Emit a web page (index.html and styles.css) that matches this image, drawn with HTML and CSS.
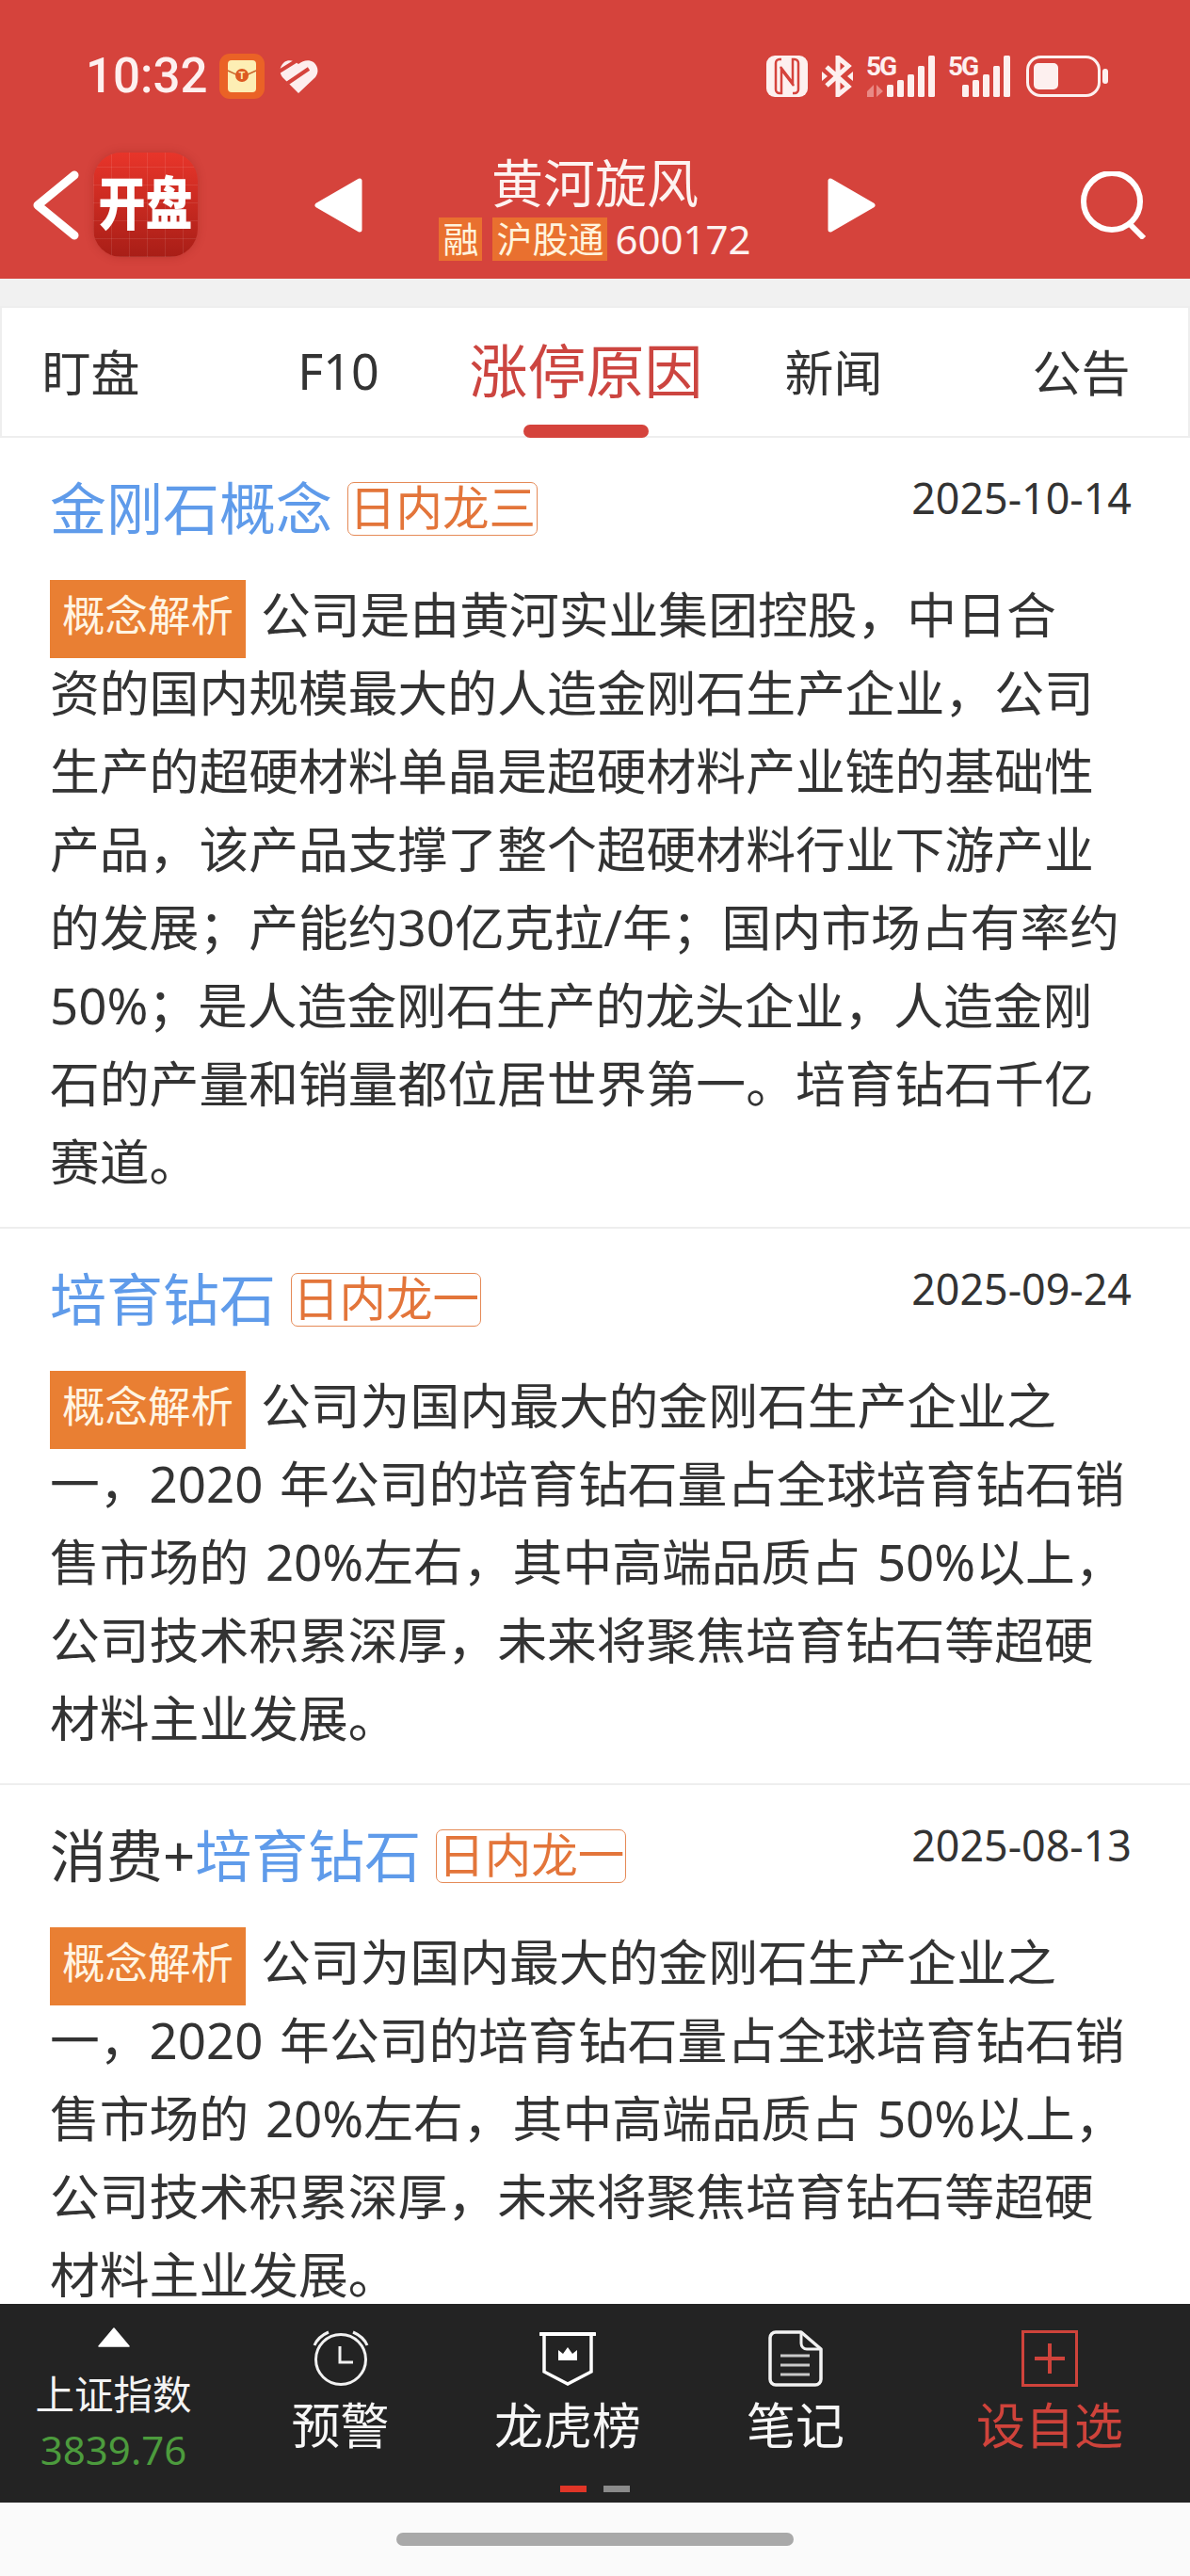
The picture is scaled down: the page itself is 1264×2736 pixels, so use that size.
FILE: index.html
```html
<!DOCTYPE html>
<html lang="zh-CN">
<head>
<meta charset="utf-8">
<title>黄河旋风</title>
<link rel="stylesheet" href="styles.css">
</head>
<body>
<div class="app">
  <header class="header">
    <div class="status">
      <div class="status-left">
        <span class="time">10:32</span>
        <svg class="ic-env" viewBox="0 0 48 48"><rect width="48" height="48" rx="11" fill="#ea6226"/><rect x="9" y="7" width="30" height="34" rx="4" fill="#fdeeb4"/><path d="M9 18l15 7 15-7" fill="none" stroke="#c9662c" stroke-width="1.5"/><circle cx="24" cy="23" r="7" fill="#dd5a22"/><text x="24" y="27" class="env-t">T</text></svg>
        <svg class="ic-heart" viewBox="0 0 41 35"><path d="M20 35L3 18C-1 13 0 6 5 2c4-3 10-2 15 2 5-4 11-5 16-2 5 4 6 11 2 16z" fill="#fdeeee"/><path d="M-2 13L17 1M6 26L31 9" stroke="#d5433c" stroke-width="4" fill="none"/></svg>
      </div>
      <div class="status-right">
        <svg class="ic-nfc" viewBox="0 0 44 44"><rect width="44" height="44" rx="9" fill="#fdf0ef"/><path d="M16 4h-2a4 4 0 0 0-4 4v28a4 4 0 0 0 4 4h2V15l13 17" fill="none" stroke="#d5433c" stroke-width="2.5"/><path d="M28 40h2a4 4 0 0 0 4-4V8a4 4 0 0 0-4-4h-2v25L15 12" fill="none" stroke="#d5433c" stroke-width="2.5"/></svg>
        <svg class="ic-bt" viewBox="0 0 35 44"><path d="M6 12l23 21-11 9V2l11 9L6 32" fill="none" stroke="#fdf0ef" stroke-width="5"/><path d="M1 17l6 5-6 5zM34 17l-6 5 6 5z" fill="#fdf0ef"/></svg>
        <svg class="ic-sig" viewBox="0 0 72 44"><text x="-1" y="21" class="sig-t">5G</text><path d="M0 38l7-7v13H0zM10 31l7 7-7 6z" fill="#e98a85"/><rect x="21" y="31" width="7" height="13" rx="1.5" fill="#fdf0ef"/><rect x="32" y="26" width="7" height="18" rx="1.5" fill="#fdf0ef"/><rect x="43" y="20" width="7" height="24" rx="1.5" fill="#fdf0ef"/><rect x="54" y="11" width="7" height="33" rx="1.5" fill="#fdf0ef"/><rect x="65" y="0" width="7" height="44" rx="1.5" fill="#fdf0ef"/></svg>
        <svg class="ic-sig ic-sig-b" viewBox="0 0 66 44"><text x="0" y="21" class="sig-t">5G</text><rect x="15" y="31" width="7" height="13" rx="1.5" fill="#fdf0ef"/><rect x="26" y="26" width="7" height="18" rx="1.5" fill="#fdf0ef"/><rect x="37" y="20" width="7" height="24" rx="1.5" fill="#fdf0ef"/><rect x="48" y="11" width="7" height="33" rx="1.5" fill="#fdf0ef"/><rect x="59" y="0" width="7" height="44" rx="1.5" fill="#fdf0ef"/></svg>
        <svg class="ic-bat" viewBox="0 0 90 44"><rect x="4.5" y="1.5" width="76" height="41" rx="14" fill="none" stroke="#fdf0ef" stroke-width="3"/><rect x="11" y="8" width="26" height="28" rx="5" fill="#fdf0ef"/><rect x="84" y="14" width="6" height="16" rx="3" fill="#fdf0ef"/></svg>
      </div>
    </div>
    <div class="nav">
      <svg class="ic-back" viewBox="0 0 49 74"><path d="M44 5L5 37l39 32" fill="none" stroke="#fff" stroke-width="9" stroke-linecap="round" stroke-linejoin="round"/></svg>
      <div class="logo"><span class="logo-text">开盘</span></div>
      <svg class="ic-tri ic-prev" viewBox="0 0 51 58"><path d="M48 3v52L3 29z" fill="#fff" stroke="#fff" stroke-width="5" stroke-linejoin="round"/></svg>
      <div class="stock">
        <div class="stock-name">黄河旋风</div>
        <div class="stock-sub"><span class="flag">融</span><span class="flag">沪股通</span><span class="code">600172</span></div>
      </div>
      <svg class="ic-tri ic-next" viewBox="0 0 51 58"><path d="M3 3v52l45-26z" fill="#fff" stroke="#fff" stroke-width="5" stroke-linejoin="round"/></svg>
      <svg class="ic-search" viewBox="0 0 72 72"><circle cx="33" cy="32" r="30" fill="none" stroke="#fff" stroke-width="6"/><path d="M52 56l15 15" stroke="#fff" stroke-width="6"/></svg>
    </div>
  </header>
  <div class="strip"></div>
  <nav class="tabs">
    <div class="tabs-inner">
      <div class="tab">盯盘</div>
      <div class="tab">F10</div>
      <div class="tab tab-active">涨停原因</div>
      <div class="tab">新闻</div>
      <div class="tab">公告</div>
    </div>
  </nav>
  <main class="list">
    <article class="item">
      <div class="item-head">
        <div class="item-title"><span class="link">金刚石概念</span><span class="rank">日内龙三</span></div>
        <div class="date">2025-10-14</div>
      </div>
      <p class="body"><span class="chip">概念解析</span>公司是由黄河实业集团控股，中日合<br>资的国内规模最大的人造金刚石生产企业，公司生产的超硬材料单晶是超硬材料产业链的基础性产品，该产品支撑了整个超硬材料行业下游产业的发展；产能约30亿克拉/年；国内市场占有率约50%；是人造金刚石生产的龙头企业，人造金刚石的产量和销量都位居世界第一。培育钻石千亿赛道。</p>
    </article>
    <article class="item">
      <div class="item-head">
        <div class="item-title"><span class="link">培育钻石</span><span class="rank">日内龙一</span></div>
        <div class="date">2025-09-24</div>
      </div>
      <p class="body"><span class="chip">概念解析</span>公司为国内最大的金刚石生产企业之<br>一，2020 年公司的培育钻石量占全球培育钻石销售市场的 20%左右，其中高端品质占 50%以上，公司技术积累深厚，未来将聚焦培育钻石等超硬材料主业发展。</p>
    </article>
    <article class="item">
      <div class="item-head">
        <div class="item-title"><span>消费+</span><span class="link">培育钻石</span><span class="rank">日内龙一</span></div>
        <div class="date">2025-08-13</div>
      </div>
      <p class="body"><span class="chip">概念解析</span>公司为国内最大的金刚石生产企业之<br>一，2020 年公司的培育钻石量占全球培育钻石销售市场的 20%左右，其中高端品质占 50%以上，公司技术积累深厚，未来将聚焦培育钻石等超硬材料主业发展。</p>
    </article>
  </main>
  <footer class="bar">
    <div class="bar-item index">
      <svg class="ic-up" viewBox="0 0 34 21"><path d="M17 1l16 19H1z" fill="#fff" stroke="#fff" stroke-width="1.5" stroke-linejoin="round"/></svg>
      <div class="index-name">上证指数</div>
      <div class="index-value">3839.76</div>
    </div>
    <div class="bar-item">
      <svg class="bar-icon" viewBox="0 0 60 60"><circle cx="30" cy="31" r="26.5" fill="none" stroke="#f2f2f2" stroke-width="3"/><path d="M29 17v17h14" fill="none" stroke="#f2f2f2" stroke-width="3"/><path d="M2 16C5 9 10 5 17 2M58 16C55 9 50 5 43 2" fill="none" stroke="#f2f2f2" stroke-width="3"/></svg>
      <div class="bar-label">预警</div>
    </div>
    <div class="bar-item">
      <svg class="bar-icon" viewBox="0 0 60 60"><path d="M1 4h58" stroke="#fff" stroke-width="4" stroke-linecap="round"/><path d="M5 4v40l25 13 25-13V4" fill="none" stroke="#fff" stroke-width="3.5"/><path d="M20 32V21l5 4 5-7 5 7 5-4v11z" fill="#fff"/></svg>
      <div class="bar-label">龙虎榜</div>
    </div>
    <div class="bar-item">
      <svg class="bar-icon" viewBox="0 0 60 60"><path d="M36 2H9a6 6 0 0 0-6 6v44a6 6 0 0 0 6 6h42a6 6 0 0 0 6-6V20z" fill="none" stroke="#f2f2f2" stroke-width="3.5" stroke-linejoin="round"/><path d="M36 2v12a6 6 0 0 0 6 6h15" fill="none" stroke="#f2f2f2" stroke-width="3"/><path d="M14 27h31M14 37h31M14 47h31" stroke="#c9c9c9" stroke-width="3"/></svg>
      <div class="bar-label">笔记</div>
    </div>
    <div class="bar-item">
      <svg class="bar-icon" viewBox="0 0 60 60"><rect x="1.5" y="1.5" width="57" height="57" fill="none" stroke="#cf433b" stroke-width="3"/><path d="M30 14v32M14 30h32" stroke="#cf433b" stroke-width="4"/></svg>
      <div class="bar-label bar-label-red">设自选</div>
    </div>
    <div class="dots"><span class="dot dot-on"></span><span class="dot"></span></div>
  </footer>
  <div class="home"><span class="home-pill"></span></div>
</div>
</body>
</html>
```

FILE: styles.css
```css
* { box-sizing: border-box; }
html, body { margin: 0; padding: 0; background: #fff; }
body { font-family: "Noto Sans", "Noto Sans CJK SC", sans-serif; color: #333; }
svg { display: block; flex: none; }
.app { width: 1264px; height: 2736px; display: flex; flex-direction: column; overflow: hidden; }

/* header */
.header { height: 296px; background: #d5433c; flex: none; }
.status { display: flex; justify-content: space-between; align-items: center; height: 150px; padding: 57px 87px 45px 91px; }
.status-left { display: flex; align-items: center; }
.time { font-family: Roboto, sans-serif; font-weight: 500; font-size: 51px; line-height: 48px; color: #fdf0ef; width: 142px; }
.ic-env { width: 48px; height: 48px; }
.env-t { font-family: Roboto, sans-serif; font-size: 11px; font-weight: 700; fill: #fdeeb4; text-anchor: middle; }
.ic-heart { width: 41px; height: 35px; margin-left: 16px; }
.status-right { display: flex; align-items: center; gap: 14px; }
.ic-nfc { width: 44px; height: 44px; }
.ic-bt { width: 35px; height: 44px; }
.ic-sig { width: 72px; height: 44px; overflow: visible; }
.ic-sig-b { width: 66px; }
.ic-bat { width: 90px; height: 44px; }
.sig-t { font-family: Roboto, sans-serif; font-weight: 700; font-size: 28px; letter-spacing: -2px; fill: #fdf0ef; }

.nav { display: flex; align-items: center; height: 135px; padding: 0 44px 0 35px; }
.ic-back { width: 49px; height: 74px; }
.logo { width: 111px; height: 111px; margin-left: 15px; padding-bottom: 4px; border-radius: 30px; display: flex; align-items: center; justify-content: center; box-shadow: 0 0 10px rgba(120, 20, 15, .25);
  background:
    repeating-linear-gradient(90deg, rgba(255,255,255,.09) 0 1px, transparent 1px 19px),
    repeating-linear-gradient(0deg, rgba(255,255,255,.09) 0 1px, transparent 1px 19px),
    linear-gradient(180deg, #e8352a, #a81e17); }
.logo-text { color: #fff; font-weight: 900; font-size: 50px; line-height: 60px; transform: scaleY(1.22); }
.ic-tri { width: 51px; height: 58px; }
.ic-prev { margin-left: 124px; }
.stock { flex: 1; display: flex; flex-direction: column; align-items: center; padding-top: 3px; }
.stock-name { font-size: 55px; line-height: 64px; color: #fdf3f1; }
.stock-sub { display: flex; align-items: center; height: 46px; margin-top: 5px; }
.flag { background: #e9702f; color: #fff3dc; font-size: 38px; line-height: 44px; height: 46px; padding: 0 4px; margin-right: 11px; }
.code { font-size: 42px; line-height: 46px; color: #fdf3f1; margin-left: -3px; }
.ic-search { width: 72px; height: 72px; margin-left: 218px; }

/* tabs */
.strip { height: 29px; background: #f1f1f1; flex: none; }
.tabs { height: 140px; flex: none; background: #fff; box-shadow: inset 0 0 0 2px #eee; overflow: hidden; }
.tabs-inner { display: grid; grid-template-columns: repeat(5, 263px); margin-left: -35px; height: 100%; }
.tab { position: relative; display: flex; align-items: center; justify-content: center; font-size: 52px; color: #333; padding-top: 2px; padding-bottom: 6px; }
.tab-active { font-size: 62px; color: #cc4540; padding-top: 0; padding-bottom: 8px; }
.tab-active::after { content: ""; position: absolute; left: 65px; right: 65px; bottom: 0; height: 14px; border-radius: 7px; background: #d5433c; }

/* list */
.list { flex: 1; min-height: 0; overflow: hidden; background: #fff; }
.item { padding: 47px 53px 28px; border-bottom: 2px solid #eee; }
.item:last-child { border-bottom: 0; }
.item-head { display: flex; justify-content: space-between; align-items: flex-start; height: 57px; margin-bottom: 42px; }
.item-title { display: flex; align-items: center; font-size: 60px; height: 57px; line-height: 57px; white-space: nowrap; }
.link { color: #5f9bea; }
.rank { margin-left: 16px; height: 57px; padding: 0 1px; border: 1.5px solid #e58a57; border-radius: 7px; color: #e3753a; font-size: 49.5px; line-height: 52px; }
.date { font-size: 44.8px; line-height: 34px; color: #333; margin-right: 9px; }
.body { margin: 0; font-size: 52.8px; line-height: 83px; word-spacing: 4px; color: #333; }
.chip { display: inline-block; vertical-align: top; width: 208px; height: 83px; margin: 5px 16px -5px 0; background: #e97f33; color: #fff5e3; font-size: 45.5px; line-height: 74px; text-align: center; }

/* bottom bar */
.bar { position: relative; height: 211px; flex: none; background: #232323; display: grid; grid-template-columns: 241px 241px 242px 242px 1fr; padding-top: 28px; }
.bar-item { display: flex; flex-direction: column; align-items: center; }
.bar-icon { width: 60px; height: 60px; }
.bar-label { font-size: 52px; line-height: 62px; margin-top: 10px; color: #f7f7f7; }
.bar-label-red { color: #cf433b; }
.ic-up { width: 34px; height: 21px; margin-top: -3px; }
.index-name { font-size: 41.5px; line-height: 50px; margin-top: 25px; color: #f3f3f3; }
.index-value { font-size: 42px; line-height: 50px; margin-top: 9px; color: #4c9b3d; }
.dots { position: absolute; top: 193px; left: 595px; display: flex; gap: 18px; }
.dot { width: 28px; height: 7px; background: #8a8a8a; }
.dot-on { background: #e03527; }

.home { height: 78px; flex: none; background: #fafafa; display: flex; align-items: center; justify-content: center; }
.home-pill { width: 422px; height: 14px; border-radius: 7px; background: #a9a9a9; margin-left: -1px; }
```
